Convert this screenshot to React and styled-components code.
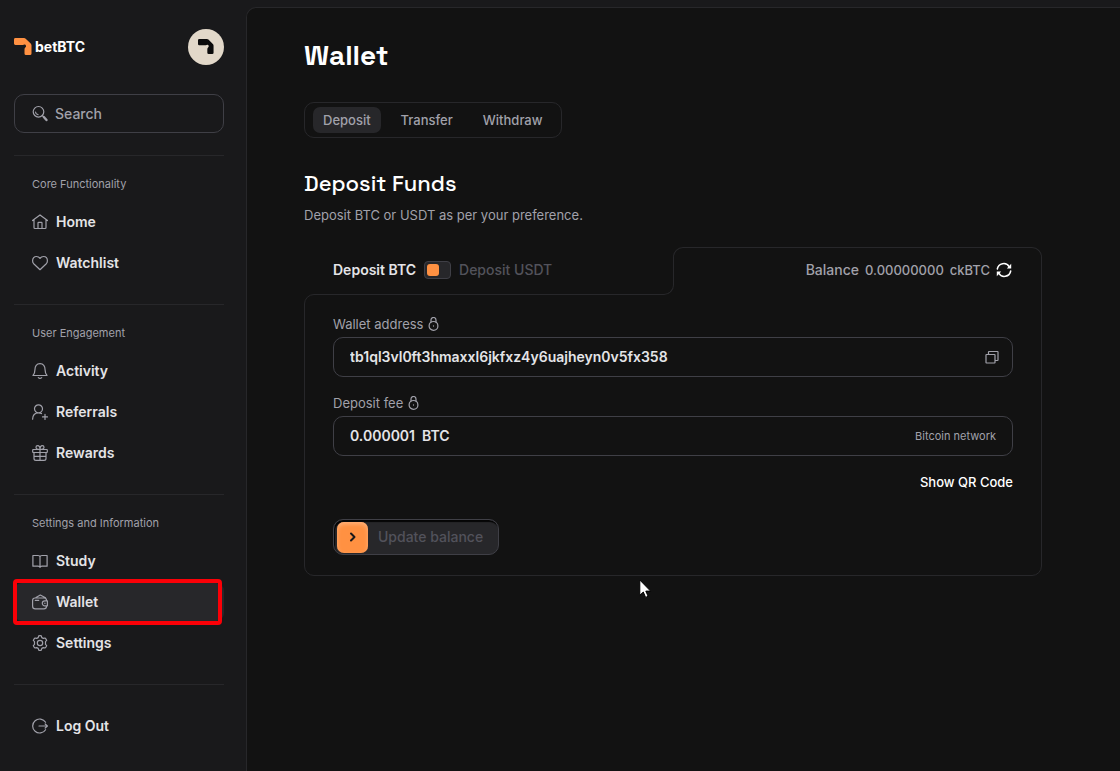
import React from "react";
import styled, { createGlobalStyle, css } from "styled-components";

const c = {
  side: "#19191b",
  main: "#121212",
  line: "#27272a",
  field: "#3f3f46",
  muted: "#a1a1aa",
  dim: "#52525b",
  text: "#e4e4e7",
  orange: "#ff9142",
};

const GlobalStyle = createGlobalStyle`
  *, *::before, *::after { box-sizing: border-box; }
  body { margin: 0; background: ${c.side}; color: ${c.text}; font: 500 14px/20px Inter, "Liberation Sans", sans-serif; }
  button, input { font: inherit; color: inherit; }
  h1, h2, p { margin: 0; }
`;

const Page = styled.div`
  display: flex;
  min-height: 100vh;
`;

const Sidebar = styled.aside`
  flex: 0 0 246px;
  min-width: 0;
  padding: 29px 22px 20px 14px;
`;

const Brand = styled.header`
  display: flex;
  align-items: center;
  justify-content: space-between;
`;

const Logo = styled.a`
  display: flex;
  align-items: center;
  gap: 3px;
  color: #fff;
  font-weight: 700;
  text-decoration: none;
`;

const Avatar = styled.button`
  display: grid;
  place-items: center;
  width: 36px;
  height: 36px;
  padding: 0;
  border: 0;
  border-radius: 50%;
  background: #e2d8c9;
  color: #0b0b0b;
`;

const SearchBox = styled.label`
  display: flex;
  align-items: center;
  gap: 6px;
  height: 39px;
  margin: 29px 0 22px;
  padding: 0 16px;
  border: 1px solid ${c.field};
  border-radius: 10px;
  color: ${c.muted};
  svg { flex: none; }
`;

const BareInput = styled.input`
  min-width: 0;
  padding: 0;
  border: 0;
  outline: 0;
  background: transparent;
  ${(p) => (p.$fit ? "field-sizing: content;" : "width: 100%;")}
  &::placeholder { color: ${c.muted}; opacity: 1; }
`;

const Section = styled.section`
  padding: ${(p) => (p.$bare ? "22px" : "20px")} 0 22px;
  border-top: 1px solid ${c.line};
`;

const SectionLabel = styled.div`
  margin-bottom: 11px;
  padding-left: 18px;
  color: ${c.muted};
  font-size: 11px;
  font-weight: 400;
  line-height: 16px;
`;

const NavList = styled.div`
  display: flex;
  flex-direction: column;
  gap: 3px;
`;

const NavItem = styled.a`
  position: relative;
  display: flex;
  align-items: center;
  gap: 8px;
  height: 38px;
  padding-left: 18px;
  border-radius: 8px;
  color: ${c.text};
  font-weight: 600;
  text-decoration: none;
  svg { color: ${c.muted}; }
  ${(p) =>
    p.$active &&
    css`
      background: ${c.line};
      &::after {
        content: "";
        position: absolute;
        inset: -4px 2px -4px -1px;
        border: 4px solid #fb0007;
        border-radius: 4px;
      }
    `}
`;

const Main = styled.main`
  position: relative;
  flex: 1;
  min-width: 0;
  margin: 7px 0 0;
  padding: 29px 58px 40px 57px;
  border: 1px solid ${c.line};
  border-right: 0;
  border-radius: 10px 0 0 10px;
  background: ${c.main};
`;

const Content = styled.div`
  max-width: 738px;
`;

const Title = styled.h1`
  color: #fff;
  font: 600 28px/36px "Space Grotesk", Inter, sans-serif;
`;

const Tabs = styled.div`
  display: flex;
  width: fit-content;
  gap: 10px;
  margin-top: 29px;
  padding: 4px 8px;
  border: 1px solid ${c.line};
  border-radius: 10px;
`;

const Tab = styled.button`
  height: 26px;
  padding: 0 10px;
  border: 0;
  border-radius: 7px;
  background: ${(p) => (p.$active ? c.line : "transparent")};
  color: ${c.muted};
  font-size: 13px;
`;

const Subtitle = styled.h2`
  margin-top: 31px;
  color: #fff;
  font: 500 22px/28px "Space Grotesk", Inter, sans-serif;
`;

const Lead = styled.p`
  margin-top: 8px;
  color: ${c.muted};
  font-size: 13px;
  font-weight: 400;
`;

const CardHead = styled.div`
  display: grid;
  grid-template-columns: 1fr 1fr;
  margin-top: 22px;
`;

const CoinSide = styled.div`
  position: relative;
  display: flex;
  align-items: center;
  gap: 8px;
  height: 47px;
  padding: 0 0 2px 29px;
  &::before, &::after {
    content: "";
    position: absolute;
    z-index: 1;
    right: -1px;
    bottom: -1px;
    width: 11px;
    height: 11px;
    background: ${c.main};
  }
  &::after {
    border: solid ${c.line};
    border-width: 0 1px 1px 0;
    border-bottom-right-radius: 10px;
  }
`;

const CoinLabel = styled.span`
  color: ${(p) => (p.$on ? c.text : c.dim)};
  font-weight: ${(p) => (p.$on ? 600 : 500)};
`;

const Switch = styled.input`
  appearance: none;
  width: 27px;
  height: 18px;
  margin: 0;
  padding: 2px;
  border: 1px solid ${c.field};
  border-radius: 4px;
  background: ${c.line};
  &::before {
    content: "";
    display: block;
    width: 12px;
    height: 12px;
    border-radius: 3px;
    background: ${c.orange};
  }
  &:checked::before { margin-left: auto; }
`;

const BalanceSide = styled.div`
  position: relative;
  display: flex;
  align-items: center;
  justify-content: flex-end;
  gap: 6px;
  height: 48px;
  margin-bottom: -1px;
  padding: 0 29px 3px;
  border: solid ${c.line};
  border-width: 1px 1px 0;
  border-radius: 10px 10px 0 0;
  background: ${c.main};
  color: ${c.muted};
`;

const Amount = styled.span`
  font-size: 13px;
`;

const IconButton = styled.button`
  display: flex;
  padding: 0;
  border: 0;
  background: none;
  color: ${(p) => (p.$bright ? "#fff" : c.muted)};
`;

const CardBody = styled.div`
  padding: 19px 28px 20px;
  border: 1px solid ${c.line};
  border-radius: 10px 0 10px 10px;
`;

const Field = styled.div`
  margin-bottom: 16px;
`;

const FieldLabel = styled.label`
  display: flex;
  align-items: center;
  gap: 5px;
  margin-bottom: 3px;
  color: ${c.muted};
  font-size: 13px;
  font-weight: 400;
`;

const FieldBox = styled.div`
  display: flex;
  align-items: center;
  gap: 7px;
  height: 40px;
  padding: 0 13px 0 16px;
  border: 1px solid ${c.field};
  border-radius: 10px;
  font-weight: 600;
`;

const Note = styled.span`
  margin: 0 3px 0 auto;
  color: ${c.muted};
  font-size: 11px;
  font-weight: 400;
`;

const TextButton = styled.button`
  display: block;
  margin: 0 0 0 auto;
  padding: 0;
  border: 0;
  background: none;
  color: #fff;
  font-size: 13px;
`;

const UpdateButton = styled.button`
  display: flex;
  align-items: center;
  gap: 10px;
  height: 36px;
  margin-top: 27px;
  padding: 0 15px 0 3px;
  border: 1px solid ${c.field};
  border-radius: 10px;
  background: ${c.line};
  box-shadow: inset 1px 2px 1px #050505;
  color: ${c.dim};
`;

const Knob = styled.span`
  display: grid;
  place-items: center;
  width: 31px;
  height: 31px;
  border-radius: 7px;
  background: ${c.orange};
  box-shadow: inset 0 2px 4px #ffb27c;
  color: #19191b;
`;

const Pointer = styled.svg`
  position: absolute;
  left: 392px;
  top: 571px;
`;

const Icon = ({ w = 16, h = w, sw = 1.2, children }) => (
  <svg width={w} height={h} viewBox={`0 0 ${w} ${h}`} fill="none" stroke="currentColor" strokeWidth={sw} strokeLinecap="round" strokeLinejoin="round" aria-hidden="true">
    {children}
  </svg>
);

const icons = {
  home: <path d="M.5 6.600 8 .9l7.500 5.700M2 5.600v8q0 .9.9.9h10.200q.9 0 .9-.9v-8M6 14.500V9q0-.6.600-.600h2.800q.6 0 .6.6v5.500" />,
  heart: <path d="M8 14.700 1.700 8.700C.9 7.900.6 6.900.6 5.700.6 3.200 2.200 1.500 4.400 1.500 6 1.500 7.300 2.300 8 3.400 8.700 2.300 10 1.500 11.600 1.500c2.200 0 3.800 1.700 3.800 4.200 0 1.200-.3 2.200-1.100 3Z" />,
  bell: <path d="M1 12.500h14c-1.400-1.600-1.900-3-1.900-5.500 0-3.800-1.800-6.300-5.100-6.300S2.900 3.200 2.900 7c0 2.500-.5 3.900-1.900 5.500ZM6.300 14.600q1.700 1.400 3.400 0" />,
  referrals: <path d="M6.500 8.800a4 4 0 1 0 0-8 4 4 0 0 0 0 8ZM.6 15.200C.7 11.200 3 8.800 6.500 8.800q1.800 0 3 .8M13 10.300v5.100M10.500 12.900h5" />,
  gift: <path d="M1.200 4.500h13.600q.5 0 .5.500v2q0 .5-.5.500H1.200q-.5 0-.5-.5V5q0-.5.500-.5ZM2 7.500v6q0 1.900 2 1.900h8q2 0 2-1.900v-6M8 4.500v11M2 11.300h12M8 4.500C5 4.500 4 3.700 4 2.300 4 1.200 4.700.6 5.700.6 7.200.6 8 2 8 4.500c0-2.500.8-3.900 2.300-3.900 1 0 1.700.6 1.700 1.700 0 1.400-1 2.200-4 2.200Z" />,
  book: <path d="M8 4q0-1.500-2-1.500H.9v10.700H6q1.700 0 2 1.200.3-1.200 2-1.200h5.100V2.500H10Q8 2.500 8 4v10" />,
  wallet: <path d="M4 3.500 8.300 1l5.200 2.800M14.500 6.200q0-2.200-2.200-2.200H3Q.6 4 .6 6.400v5.800q0 2.700 2.700 2.700h8.500q2.700 0 2.700-2.400M3.300 6.400h3.400M15.400 6.800h-2.600a2.500 2.500 0 0 0 0 5h2.600ZM12.900 9.200v.2" />,
  gear: <><circle cx="8" cy="8" r="2.700" /><path d="M6.700.9q1.300-.5 2.600 0l.5 1.700 1.500.8 1.700-.4q1.200 1 1.700 2.400l-1.200 1.200v2.800l1.200 1.200q-.5 1.400-1.700 2.400l-1.700-.4-1.500.8-.5 1.700q-1.300.5-2.600 0l-.5-1.700-1.500-.8-1.700.4q-1.200-1-1.700-2.400l1.200-1.200V6.600L1.300 5.400Q1.800 4 3 3l1.700.4 1.500-.8Z" /></>,
  logout: <path d="M13.600 4.300A7 7 0 1 0 13.600 11.700M7 8h8.400M13.200 6l2.200 2-2.200 2" />,
};

const LogoMark = ({ size }) => (
  <svg width={size} height={size} viewBox="0 0 18 18" fill="currentColor" aria-hidden="true">
    <path d="M1.400 0H10q1 0 1.700.7l5 4.800q.8.800.8 2v8q0 1.500-1.500 1.500h-4q-1.500 0-1.500-1.500v-4q0-1.200.8-1.900 1-.8.700-1.900-.4-1.200-1.600-1.100-.7.100-1.500.400H1.400Q0 7 0 5.600V1.400Q0 0 1.400 0Z" />
  </svg>
);

const BrandMark = styled.span`
  display: flex;
  color: ${c.orange};
`;

const Lock = () => (
  <Icon w={11} h={14}>
    <circle cx="5.500" cy="8.900" r="4.400" />
    <path d="M3 5.200V3a2.500 2.500 0 0 1 5 0v2.200M5.500 8.800v.3" />
  </Icon>
);

const sections = [
  ["Core Functionality", [["Home", "home"], ["Watchlist", "heart"]]],
  ["User Engagement", [["Activity", "bell"], ["Referrals", "referrals"], ["Rewards", "gift"]]],
  ["Settings and Information", [["Study", "book"], ["Wallet", "wallet"], ["Settings", "gear"]]],
];

const NavLink = ({ name, icon }) => (
  <NavItem href="#" $active={name === "Wallet"} aria-current={name === "Wallet" ? "page" : undefined}>
    <Icon>{icons[icon]}</Icon>
    {name}
  </NavItem>
);

export default function App() {
  return (
    <Page>
      <GlobalStyle />
      <Sidebar>
        <Brand>
          <Logo href="#">
            <BrandMark><LogoMark size={18} /></BrandMark>
            betBTC
          </Logo>
          <Avatar type="button" aria-label="Profile"><LogoMark size={16} /></Avatar>
        </Brand>
        <SearchBox>
          <Icon w={18}>
            <circle cx="7.500" cy="6.800" r="5.300" />
            <path d="M4.500 7A3 3 0 0 0 7 9.700M11.400 10.600l1.200 1.200" />
            <path d="m12.800 12 2.700 3" strokeWidth="2.400" />
          </Icon>
          <BareInput type="search" placeholder="Search" aria-label="Search" />
        </SearchBox>
        <nav>
          {sections.map(([label, items]) => (
            <Section key={label}>
              <SectionLabel>{label}</SectionLabel>
              <NavList>
                {items.map(([name, icon]) => <NavLink key={name} name={name} icon={icon} />)}
              </NavList>
            </Section>
          ))}
          <Section $bare>
            <NavLink name="Log Out" icon="logout" />
          </Section>
        </nav>
      </Sidebar>

      <Main>
        <Content>
          <Title>Wallet</Title>
          <Tabs role="tablist">
            <Tab type="button" role="tab" aria-selected="true" $active>Deposit</Tab>
            <Tab type="button" role="tab" aria-selected="false">Transfer</Tab>
            <Tab type="button" role="tab" aria-selected="false">Withdraw</Tab>
          </Tabs>
          <Subtitle>Deposit Funds</Subtitle>
          <Lead>Deposit BTC or USDT as per your preference.</Lead>

          <CardHead>
            <CoinSide>
              <CoinLabel $on>Deposit BTC</CoinLabel>
              <Switch type="checkbox" role="switch" aria-label="Deposit USDT" />
              <CoinLabel>Deposit USDT</CoinLabel>
            </CoinSide>
            <BalanceSide>
              Balance <Amount>0.00000000</Amount> <Amount>ckBTC</Amount>
              <IconButton type="button" aria-label="Refresh balance" $bright>
                <Icon sw={1.5}>
                  <path d="M1.300 7A6.500 6.500 0 0 1 13.300 4.800M14.700 9A6.500 6.500 0 0 1 2.700 11.200" />
                  <path d="M15.200 1.800v4.600h-4.400ZM.8 14.200V9.600h4.400Z" fill="currentColor" stroke="none" />
                </Icon>
              </IconButton>
            </BalanceSide>
          </CardHead>
          <CardBody>
            <Field>
              <FieldLabel htmlFor="address">Wallet address <Lock /></FieldLabel>
              <FieldBox>
                <BareInput id="address" readOnly value="tb1ql3vl0ft3hmaxxl6jkfxz4y6uajheyn0v5fx358" />
                <IconButton type="button" aria-label="Copy address">
                  <Icon w={14}>
                    <path d="M1.500 4.500h8q.500 0 .5.500v7.500q0 .5-.5.500h-8q-.500 0-.5-.5V5q0-.5.500-.5ZM3.500 4V2q0-.5.5-.5h8.500q.5 0 .5.500v8q0 .5-.5.500H10.500" />
                  </Icon>
                </IconButton>
              </FieldBox>
            </Field>
            <Field>
              <FieldLabel htmlFor="fee">Deposit fee <Lock /></FieldLabel>
              <FieldBox>
                <BareInput id="fee" $fit readOnly value="0.000001" />
                <span>BTC</span>
                <Note>Bitcoin network</Note>
              </FieldBox>
            </Field>
            <TextButton type="button">Show QR Code</TextButton>
            <UpdateButton type="button">
              <Knob>
                <Icon w={8} h={10} sw={2}><path d="m2 1.500 3.500 3.500L2 8.500" /></Icon>
              </Knob>
              Update balance
            </UpdateButton>
          </CardBody>
        </Content>
        <Pointer width="13" height="20" viewBox="0 0 13 20" fill="#fff" stroke="#000" aria-hidden="true">
          <path d="M.8 1v15.300l3.500-3.300 2.300 5.400 2.500-1.100-2.300-5.200h4.800Z" />
        </Pointer>
      </Main>
    </Page>
  );
}
